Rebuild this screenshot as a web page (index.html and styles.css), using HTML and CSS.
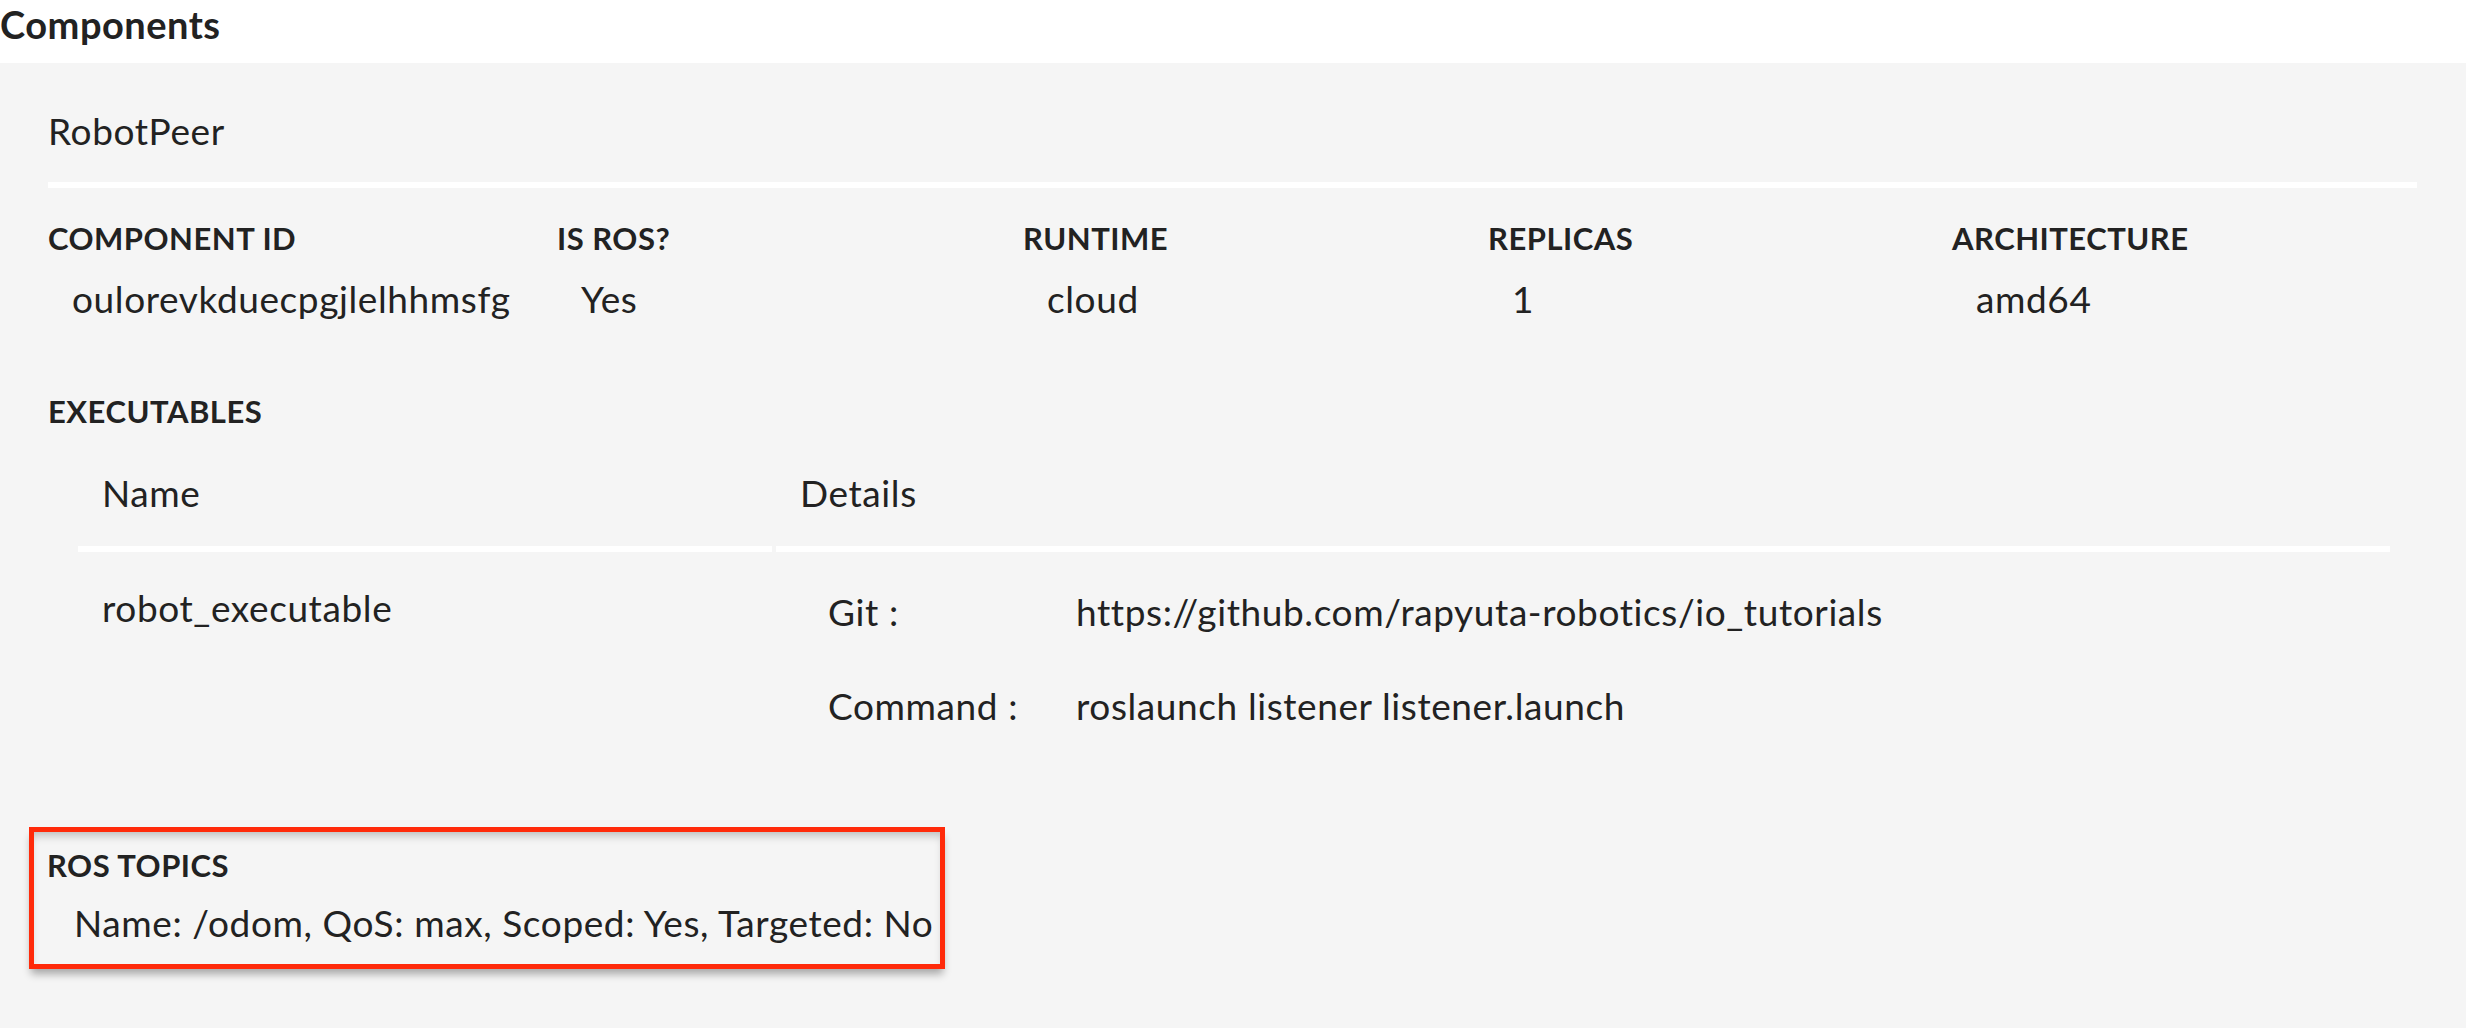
FILE: index.html
```html
<!DOCTYPE html>
<html lang="en">
<head>
<meta charset="utf-8">
<title>Components</title>
<link rel="stylesheet" href="styles.css">
</head>
<body>
<h1 class="section-title">Components</h1>
<section class="card">
  <div class="comp-name">RobotPeer</div>
  <div class="meta">
    <div class="meta-item">
      <div class="label">COMPONENT ID</div>
      <div class="value">oulorevkduecpgjlelhhmsfg</div>
    </div>
    <div class="meta-item">
      <div class="label">IS ROS?</div>
      <div class="value">Yes</div>
    </div>
    <div class="meta-item">
      <div class="label">RUNTIME</div>
      <div class="value">cloud</div>
    </div>
    <div class="meta-item">
      <div class="label">REPLICAS</div>
      <div class="value">1</div>
    </div>
    <div class="meta-item">
      <div class="label">ARCHITECTURE</div>
      <div class="value">amd64</div>
    </div>
  </div>

  <div class="label exec-label">EXECUTABLES</div>
  <table class="exec-table">
    <colgroup>
      <col class="col-name">
      <col class="col-details">
    </colgroup>
    <thead>
      <tr>
        <th>Name</th>
        <th>Details</th>
      </tr>
    </thead>
    <tbody>
      <tr>
        <td class="name-cell">robot_executable</td>
        <td class="details-cell">
          <dl class="details">
            <dt>Git :</dt>
            <dd>https://github.com/rapyuta-robotics/io_tutorials</dd>
            <dt>Command :</dt>
            <dd>roslaunch listener listener.launch</dd>
          </dl>
        </td>
      </tr>
    </tbody>
  </table>

  <div class="ros">
    <div class="label">ROS TOPICS</div>
    <div class="ros-value">Name: /odom, QoS: max, Scoped: Yes, Targeted: No</div>
  </div>
</section>
</body>
</html>
```

FILE: styles.css
```css
* {
  box-sizing: border-box;
}

html,
body {
  margin: 0;
  padding: 0;
}

body {
  width: 2466px;
  height: 1028px;
  overflow: hidden;
  background: #ffffff;
  color: #222222;
  font-family: Lato, "Noto Sans", sans-serif;
}

.section-title {
  margin: 0;
  padding-bottom: 14px;
  font-size: 38px;
  font-weight: 700;
  line-height: 49px;
  letter-spacing: 0.5px;
  color: #222222;
}

.card {
  min-height: 965px;
  padding: 43px 49px 0 48px;
  background: #f5f5f5;
}

.comp-name {
  padding-bottom: 26px;
  border-bottom: 6px solid #ffffff;
  font-size: 37px;
  line-height: 50px;
  letter-spacing: 0.6px;
}

.meta {
  display: grid;
  grid-template-columns: 509px 466px 465px 464px 1fr;
  padding-top: 30px;
}

.label {
  font-size: 31px;
  font-weight: 700;
  line-height: 40px;
  letter-spacing: 0.5px;
  color: #222222;
}

.value {
  margin-top: 16px;
  padding-left: 24px;
  font-size: 37px;
  line-height: 50px;
  letter-spacing: 0.6px;
}

.exec-label {
  margin-top: 67px;
}

.exec-table {
  width: 2320px;
  margin-left: 26px;
  border-collapse: separate;
  border-spacing: 4px 0;
  table-layout: fixed;
  font-size: 37px;
  line-height: 50px;
  letter-spacing: 0.6px;
}

.col-name {
  width: 694px;
}

.exec-table th {
  padding: 37px 0 28px 24px;
  border-bottom: 6px solid #ffffff;
  font-weight: 400;
  text-align: left;
}

.exec-table td {
  vertical-align: top;
}

.name-cell {
  padding: 31px 0 0 24px;
}

.details-cell {
  padding: 35px 0 22px 52px;
}

.details {
  display: grid;
  grid-template-columns: 248px 1fr;
  row-gap: 44px;
  margin: 0;
}

.details dt,
.details dd {
  margin: 0;
}

.ros {
  display: inline-block;
  margin: 74px 0 0 -19px;
  padding: 13px 7px 16px 13px;
  border: 5.5px solid #ff2a0a;
  box-shadow: 0 7px 8px -2px rgba(0, 0, 0, 0.32),
    inset 0 7px 8px -3px rgba(0, 0, 0, 0.22);
}

.ros-value {
  margin-top: 13px;
  padding-left: 27px;
  font-size: 37px;
  line-height: 50px;
  letter-spacing: 0.6px;
}
```
